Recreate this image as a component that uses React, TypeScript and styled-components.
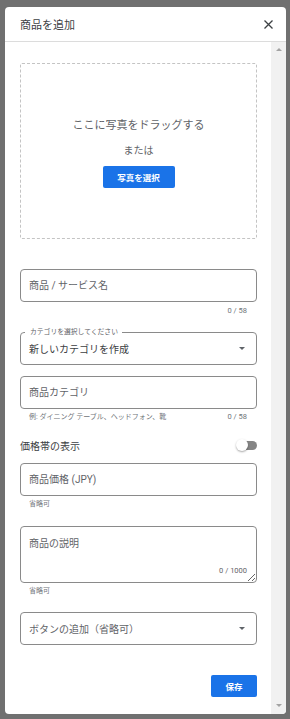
import styled, { createGlobalStyle } from 'styled-components'

const GlobalStyle = createGlobalStyle`
  html, body {
    margin: 0;
    padding: 0;
    height: 100%;
    background: #707070;
  }
  * {
    box-sizing: border-box;
  }
  body {
    font-family: Roboto, 'Noto Sans CJK JP', sans-serif;
  }
`

const Backdrop = styled.div`
  height: 719px;
  padding: 7px 4px 5px 5px;
`

const Dialog = styled.div`
  width: 281px;
  height: 707px;
  background: white;
  border-radius: 4px;
  display: flex;
  flex-direction: column;
  overflow: hidden;
`

const Header = styled.div`
  height: 35px;
  flex: none;
  display: flex;
  align-items: center;
  justify-content: space-between;
  padding: 0 12px 0 15px;
  border-bottom: 1px solid #dcdcdc;
`

const Title = styled.h2`
  margin: 0;
  font-size: 11px;
  font-weight: 400;
  color: #3c4043;
`

const CloseButton = styled.button`
  border: none;
  background: none;
  padding: 0;
  width: 12px;
  height: 12px;
  display: flex;
  align-items: center;
  justify-content: center;
  cursor: pointer;
`

const Body = styled.div`
  flex: 1;
  display: flex;
  min-height: 0;
`

const Content = styled.div`
  flex: 1;
  overflow: hidden;
  padding: 21px 14px 17px 15px;
  display: flex;
  flex-direction: column;
`

/* the scroll track drawn next to the content (nothing to scroll, so no thumb) */
const ScrollTrack = styled.div`
  width: 15px;
  flex: none;
  background: #f1f1f1;
  display: flex;
  flex-direction: column;
  justify-content: space-between;
  align-items: center;
  padding: 6px 0 7px;
`

const ScrollArrow = styled.span<{ $down?: boolean }>`
  width: 0;
  height: 0;
  border-left: 3px solid transparent;
  border-right: 3px solid transparent;
  ${(p) => (p.$down ? 'border-top: 3px solid #a3a3a3;' : 'border-bottom: 3px solid #a3a3a3;')}
`

const DropZone = styled.div`
  height: 176px;
  flex: none;
  border: 1px dashed #c4c4c4;
  border-radius: 2px;
  display: flex;
  flex-direction: column;
  align-items: center;
  justify-content: center;
  color: #5f6368;
  padding-top: 5px;
`

const DropText = styled.div`
  font-size: 11px;
  line-height: 14px;
`

const OrText = styled.div`
  font-size: 10px;
  line-height: 14px;
  margin-top: 11px;
`

const BlueButton = styled.button<{ $width: number }>`
  width: ${(p) => p.$width}px;
  height: 22px;
  border: none;
  border-radius: 2px;
  background: #1a73e8;
  color: white;
  font-family: inherit;
  font-size: 8.5px;
  font-weight: 700;
  padding: 0;
  cursor: pointer;
`

const PickButton = styled(BlueButton)`
  margin-top: 8px;
`

const Field = styled.div<{ $gap: number }>`
  position: relative;
  margin-top: ${(p) => p.$gap}px;
  flex: none;
`

const TextInput = styled.input`
  display: block;
  width: 100%;
  height: 33px;
  border: 1px solid #8a8a8a;
  border-radius: 4px;
  padding: 0 8px;
  font-family: inherit;
  font-size: 10px;
  color: #3c4043;
  outline: none;
  &::placeholder {
    color: #5f6368;
  }
`

const AreaWrap = styled.div`
  position: relative;
`

const TextArea = styled.textarea`
  display: block;
  width: 100%;
  height: 57px;
  border: 1px solid #8a8a8a;
  border-radius: 4px;
  padding: 10px 8px;
  font-family: inherit;
  font-size: 10px;
  line-height: 13px;
  resize: vertical;
  outline: none;
  &::placeholder {
    color: #5f6368;
  }
`

const InnerCounter = styled.span`
  position: absolute;
  right: 10px;
  bottom: 8px;
  font-size: 7.5px;
  color: #5f6368;
`

const HelperRow = styled.div<{ $height: number }>`
  height: ${(p) => p.$height}px;
  display: flex;
  align-items: center;
  justify-content: space-between;
  padding: 0 10px 0 9px;
  font-size: 7px;
  color: #70757a;
`

const Counter = styled.span`
  margin-left: auto;
  font-size: 7.5px;
`

const SelectBox = styled.div`
  height: 33px;
  border: 1px solid #8a8a8a;
  border-radius: 4px;
  display: flex;
  align-items: center;
  justify-content: space-between;
  padding: 0 11px 0 8px;
`

const SelectValue = styled.span<{ $muted?: boolean }>`
  font-size: 10px;
  color: ${(p) => (p.$muted ? '#5f6368' : '#3c4043')};
`

const Caret = styled.span`
  width: 0;
  height: 0;
  border-left: 3px solid transparent;
  border-right: 3px solid transparent;
  border-top: 3px solid #5f6368;
`

const FloatLabel = styled.label`
  position: absolute;
  top: -5px;
  left: 5px;
  padding: 0 4px 0 5px;
  background: white;
  font-size: 6.8px;
  line-height: 10px;
  color: #5f6368;
`

const ToggleRow = styled.div`
  height: 20px;
  margin-top: 12px;
  display: flex;
  align-items: center;
  justify-content: space-between;
  flex: none;
`

const ToggleLabel = styled.span`
  font-size: 10px;
  color: #3c4043;
`

const Switch = styled.div`
  position: relative;
  width: 21px;
  height: 12px;
  display: flex;
  align-items: center;
  justify-content: flex-end;
`

const Track = styled.div`
  width: 19px;
  height: 9px;
  border-radius: 5px;
  background: #858585;
`

const Thumb = styled.div`
  position: absolute;
  left: 0;
  top: 0;
  width: 12px;
  height: 12px;
  border-radius: 50%;
  background: white;
  box-shadow: 0 1px 2px rgba(0, 0, 0, 0.35);
`

const Footer = styled.div`
  margin-top: 30px;
  display: flex;
  justify-content: flex-end;
  flex: none;
`

function App() {
  return (
    <>
      <GlobalStyle />
      <Backdrop>
        <Dialog>
          <Header>
            <Title>商品を追加</Title>
            <CloseButton aria-label="閉じる">
              <svg width="9" height="9" viewBox="0 0 9 9">
                <path d="M0.5 0.5 L8.5 8.5 M8.5 0.5 L0.5 8.5" stroke="#3c4043" strokeWidth="1.3" />
              </svg>
            </CloseButton>
          </Header>
          <Body>
            <Content>
              <DropZone>
                <DropText>ここに写真をドラッグする</DropText>
                <OrText>または</OrText>
                <PickButton $width={72}>写真を選択</PickButton>
              </DropZone>

              <Field $gap={30}>
                <TextInput placeholder="商品 / サービス名" />
                <HelperRow $height={16}>
                  <Counter>0 / 58</Counter>
                </HelperRow>
              </Field>

              <Field $gap={14}>
                <SelectBox>
                  <SelectValue>新しいカテゴリを作成</SelectValue>
                  <Caret />
                </SelectBox>
                <FloatLabel>カテゴリを選択してください</FloatLabel>
              </Field>

              <Field $gap={11}>
                <TextInput placeholder="商品カテゴリ" />
                <HelperRow $height={14}>
                  <span>例: ダイニング テーブル、ヘッドフォン、靴</span>
                  <Counter>0 / 58</Counter>
                </HelperRow>
              </Field>

              <ToggleRow>
                <ToggleLabel>価格帯の表示</ToggleLabel>
                <Switch>
                  <Track />
                  <Thumb />
                </Switch>
              </ToggleRow>

              <Field $gap={8}>
                <TextInput placeholder="商品価格 (JPY)" />
                <HelperRow $height={14}>
                  <span>省略可</span>
                </HelperRow>
              </Field>

              <Field $gap={16}>
                <AreaWrap>
                  <TextArea placeholder="商品の説明" />
                  <InnerCounter>0 / 1000</InnerCounter>
                </AreaWrap>
                <HelperRow $height={14}>
                  <span>省略可</span>
                </HelperRow>
              </Field>

              <Field $gap={15}>
                <SelectBox>
                  <SelectValue $muted>ボタンの追加（省略可）</SelectValue>
                  <Caret />
                </SelectBox>
              </Field>

              <Footer>
                <BlueButton $width={46}>保存</BlueButton>
              </Footer>
            </Content>
            <ScrollTrack>
              <ScrollArrow />
              <ScrollArrow $down />
            </ScrollTrack>
          </Body>
        </Dialog>
      </Backdrop>
    </>
  )
}

export default App
